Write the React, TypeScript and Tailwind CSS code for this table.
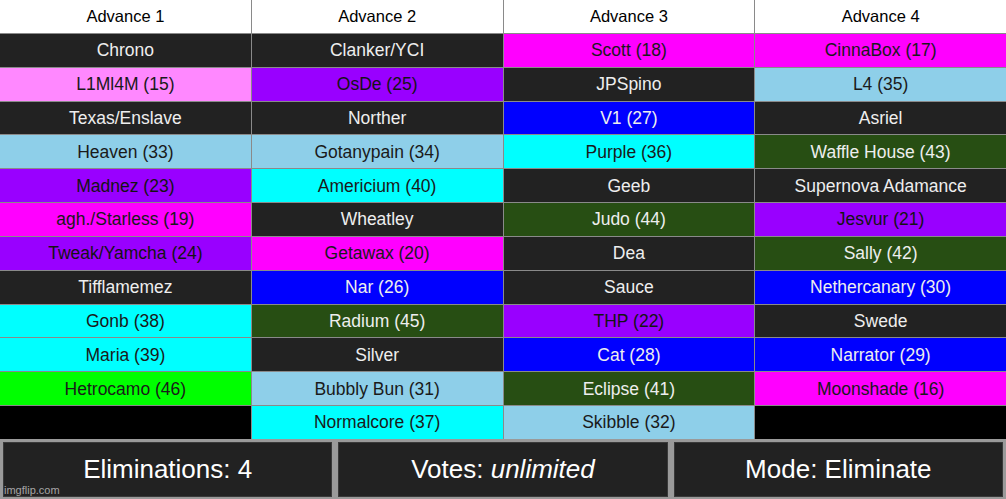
import React from "react";

type Kind = "dark" | "pink" | "purple" | "magenta" | "sky" | "cyan" | "blue" | "green" | "lime" | "black";

const KIND_CLASS: Record<Kind, string> = {
  dark: "bg-[#222222] text-[#eeeeee]",
  pink: "bg-[#ff88ff] text-[#1a1a1a]",
  purple: "bg-[#9900ff] text-[#141414]",
  magenta: "bg-[#ff00ff] text-[#1a1a1a]",
  sky: "bg-[#8ecfe9] text-[#1a1a1a]",
  cyan: "bg-[#00ffff] text-[#1a1a1a]",
  blue: "bg-[#0000ff] text-[#eeeeee]",
  green: "bg-[#274e13] text-[#eeeeee]",
  lime: "bg-[#00ff00] text-[#1a1a1a]",
  black: "bg-black text-white",
};

const columns: { title: string; cells: [string, Kind][] }[] = [
  {
    title: "Advance 1",
    cells: [
      ["Chrono", "dark"],
      ["L1Ml4M (15)", "pink"],
      ["Texas/Enslave", "dark"],
      ["Heaven (33)", "sky"],
      ["Madnez (23)", "purple"],
      ["agh./Starless (19)", "magenta"],
      ["Tweak/Yamcha (24)", "purple"],
      ["Tifflamemez", "dark"],
      ["Gonb (38)", "cyan"],
      ["Maria (39)", "cyan"],
      ["Hetrocamo (46)", "lime"],
      ["", "black"],
    ],
  },
  {
    title: "Advance 2",
    cells: [
      ["Clanker/YCI", "dark"],
      ["OsDe (25)", "purple"],
      ["Norther", "dark"],
      ["Gotanypain (34)", "sky"],
      ["Americium (40)", "cyan"],
      ["Wheatley", "dark"],
      ["Getawax (20)", "magenta"],
      ["Nar (26)", "blue"],
      ["Radium (45)", "green"],
      ["Silver", "dark"],
      ["Bubbly Bun (31)", "sky"],
      ["Normalcore (37)", "cyan"],
    ],
  },
  {
    title: "Advance 3",
    cells: [
      ["Scott (18)", "magenta"],
      ["JPSpino", "dark"],
      ["V1 (27)", "blue"],
      ["Purple (36)", "cyan"],
      ["Geeb", "dark"],
      ["Judo (44)", "green"],
      ["Dea", "dark"],
      ["Sauce", "dark"],
      ["THP (22)", "purple"],
      ["Cat (28)", "blue"],
      ["Eclipse (41)", "green"],
      ["Skibble (32)", "sky"],
    ],
  },
  {
    title: "Advance 4",
    cells: [
      ["CinnaBox (17)", "magenta"],
      ["L4 (35)", "sky"],
      ["Asriel", "dark"],
      ["Waffle House (43)", "green"],
      ["Supernova Adamance", "dark"],
      ["Jesvur (21)", "purple"],
      ["Sally (42)", "green"],
      ["Nethercanary (30)", "blue"],
      ["Swede", "dark"],
      ["Narrator (29)", "blue"],
      ["Moonshade (16)", "magenta"],
      ["", "black"],
    ],
  },
];

export default function App() {
  return (
    <div
      className="relative w-[1006px] h-[499px] overflow-hidden bg-[#9a9a9a]"
      style={{ fontFamily: '"Liberation Sans", Arial, sans-serif' }}
    >
      {/* bracket table */}
      <div className="grid grid-cols-4 h-[439px] bg-[#8a8a8a] gap-x-px">
        {col_s()}
      </div>

      {/* footer stats */}
      <div className="flex gap-[6px] px-[3px] pt-[3px] pb-[2px] h-[60px]">
        <div className="flex-1 flex items-center justify-center bg-[#222222] border border-[#3a3a3a] text-white text-[26px]">
          Eliminations: 4
        </div>
        <div className="flex-1 flex items-center justify-center bg-[#222222] border border-[#3a3a3a] text-white text-[26px]">
          Votes:&nbsp;<span className="italic">unlimited</span>
        </div>
        <div className="flex-1 flex items-center justify-center bg-[#222222] border border-[#3a3a3a] text-white text-[26px]">
          Mode: Eliminate
        </div>
      </div>

      <div className="absolute left-[4px] bottom-[3px] text-[11px] text-white/60 leading-none">
        imgflip.com
      </div>
    </div>
  );
}

function col_s() {
  return columns.map((col) => (
    <div key={col.title} className="grid grid-rows-[33px_repeat(12,1fr)] gap-y-px">
      <div className="flex items-center justify-center bg-white text-[16.5px] text-black">
        {col.title}
      </div>
      {col.cells.map(([name, kind], i) => (
        <div
          key={i}
          className={`flex items-center justify-center text-[17.5px] ${KIND_CLASS[kind]}`}
        >
          {name}
        </div>
      ))}
    </div>
  ));
}
